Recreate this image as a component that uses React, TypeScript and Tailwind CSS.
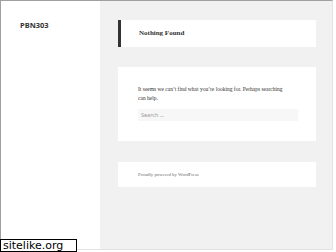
export default function App() {
  return (
    <div className="relative w-[336px] h-[252px] bg-white overflow-hidden">
      <div className="flex w-[333px] h-[250px] border-t border-l border-t-[#a0a0a0] border-l-[#a0a0a0] border-r border-b border-r-[#e3e3e3] border-b-[#e3e3e3]">
        <div className="w-[99px] bg-white pl-[19px] pt-[20px]">
          <div className="text-[7.5px] leading-[9px] font-bold text-[#333]" style={{ fontFamily: '"Noto Sans", sans-serif' }}>
            PBN303
          </div>
        </div>
        <div className="flex-1 bg-[#f1f1f1] pl-[18px] pt-[19px]" style={{ fontFamily: '"Liberation Serif", serif' }}>
          <div className="w-[198px] h-[27px] bg-white border-l-[3px] border-[#333] flex items-center pl-[18px]">
            <span className="text-[7px] font-bold text-[#333]">Nothing Found</span>
          </div>
          <div className="w-[198px] h-[74px] mt-[20px] bg-white pl-[20px] pt-[18px]">
            <p className="text-[5.5px] leading-[9px] text-[#333] whitespace-nowrap">
              It seems we can’t find what you’re looking for. Perhaps searching
              <br />
              can help.
            </p>
            <div className="mt-[6px] w-[160px] h-[12px] bg-[#f7f7f7] flex items-center pl-[3px]">
              <span className="text-[5.5px] text-[#999]" style={{ fontFamily: '"Noto Sans", sans-serif' }}>Search …</span>
            </div>
          </div>
          <div className="w-[198px] h-[25px] mt-[21px] bg-white flex items-center pl-[20px]">
            <span className="text-[4.8px] text-[#707070]">Proudly powered by WordPress</span>
          </div>
        </div>
      </div>
      <div className="absolute left-0 top-[239px] w-[77px] h-[13px] border border-black bg-white flex items-center pl-[2px]">
        <span className="text-[11px] leading-[11px] text-black" style={{ fontFamily: '"DejaVu Sans", sans-serif' }}>sitelike.org</span>
      </div>
    </div>
  );
}
